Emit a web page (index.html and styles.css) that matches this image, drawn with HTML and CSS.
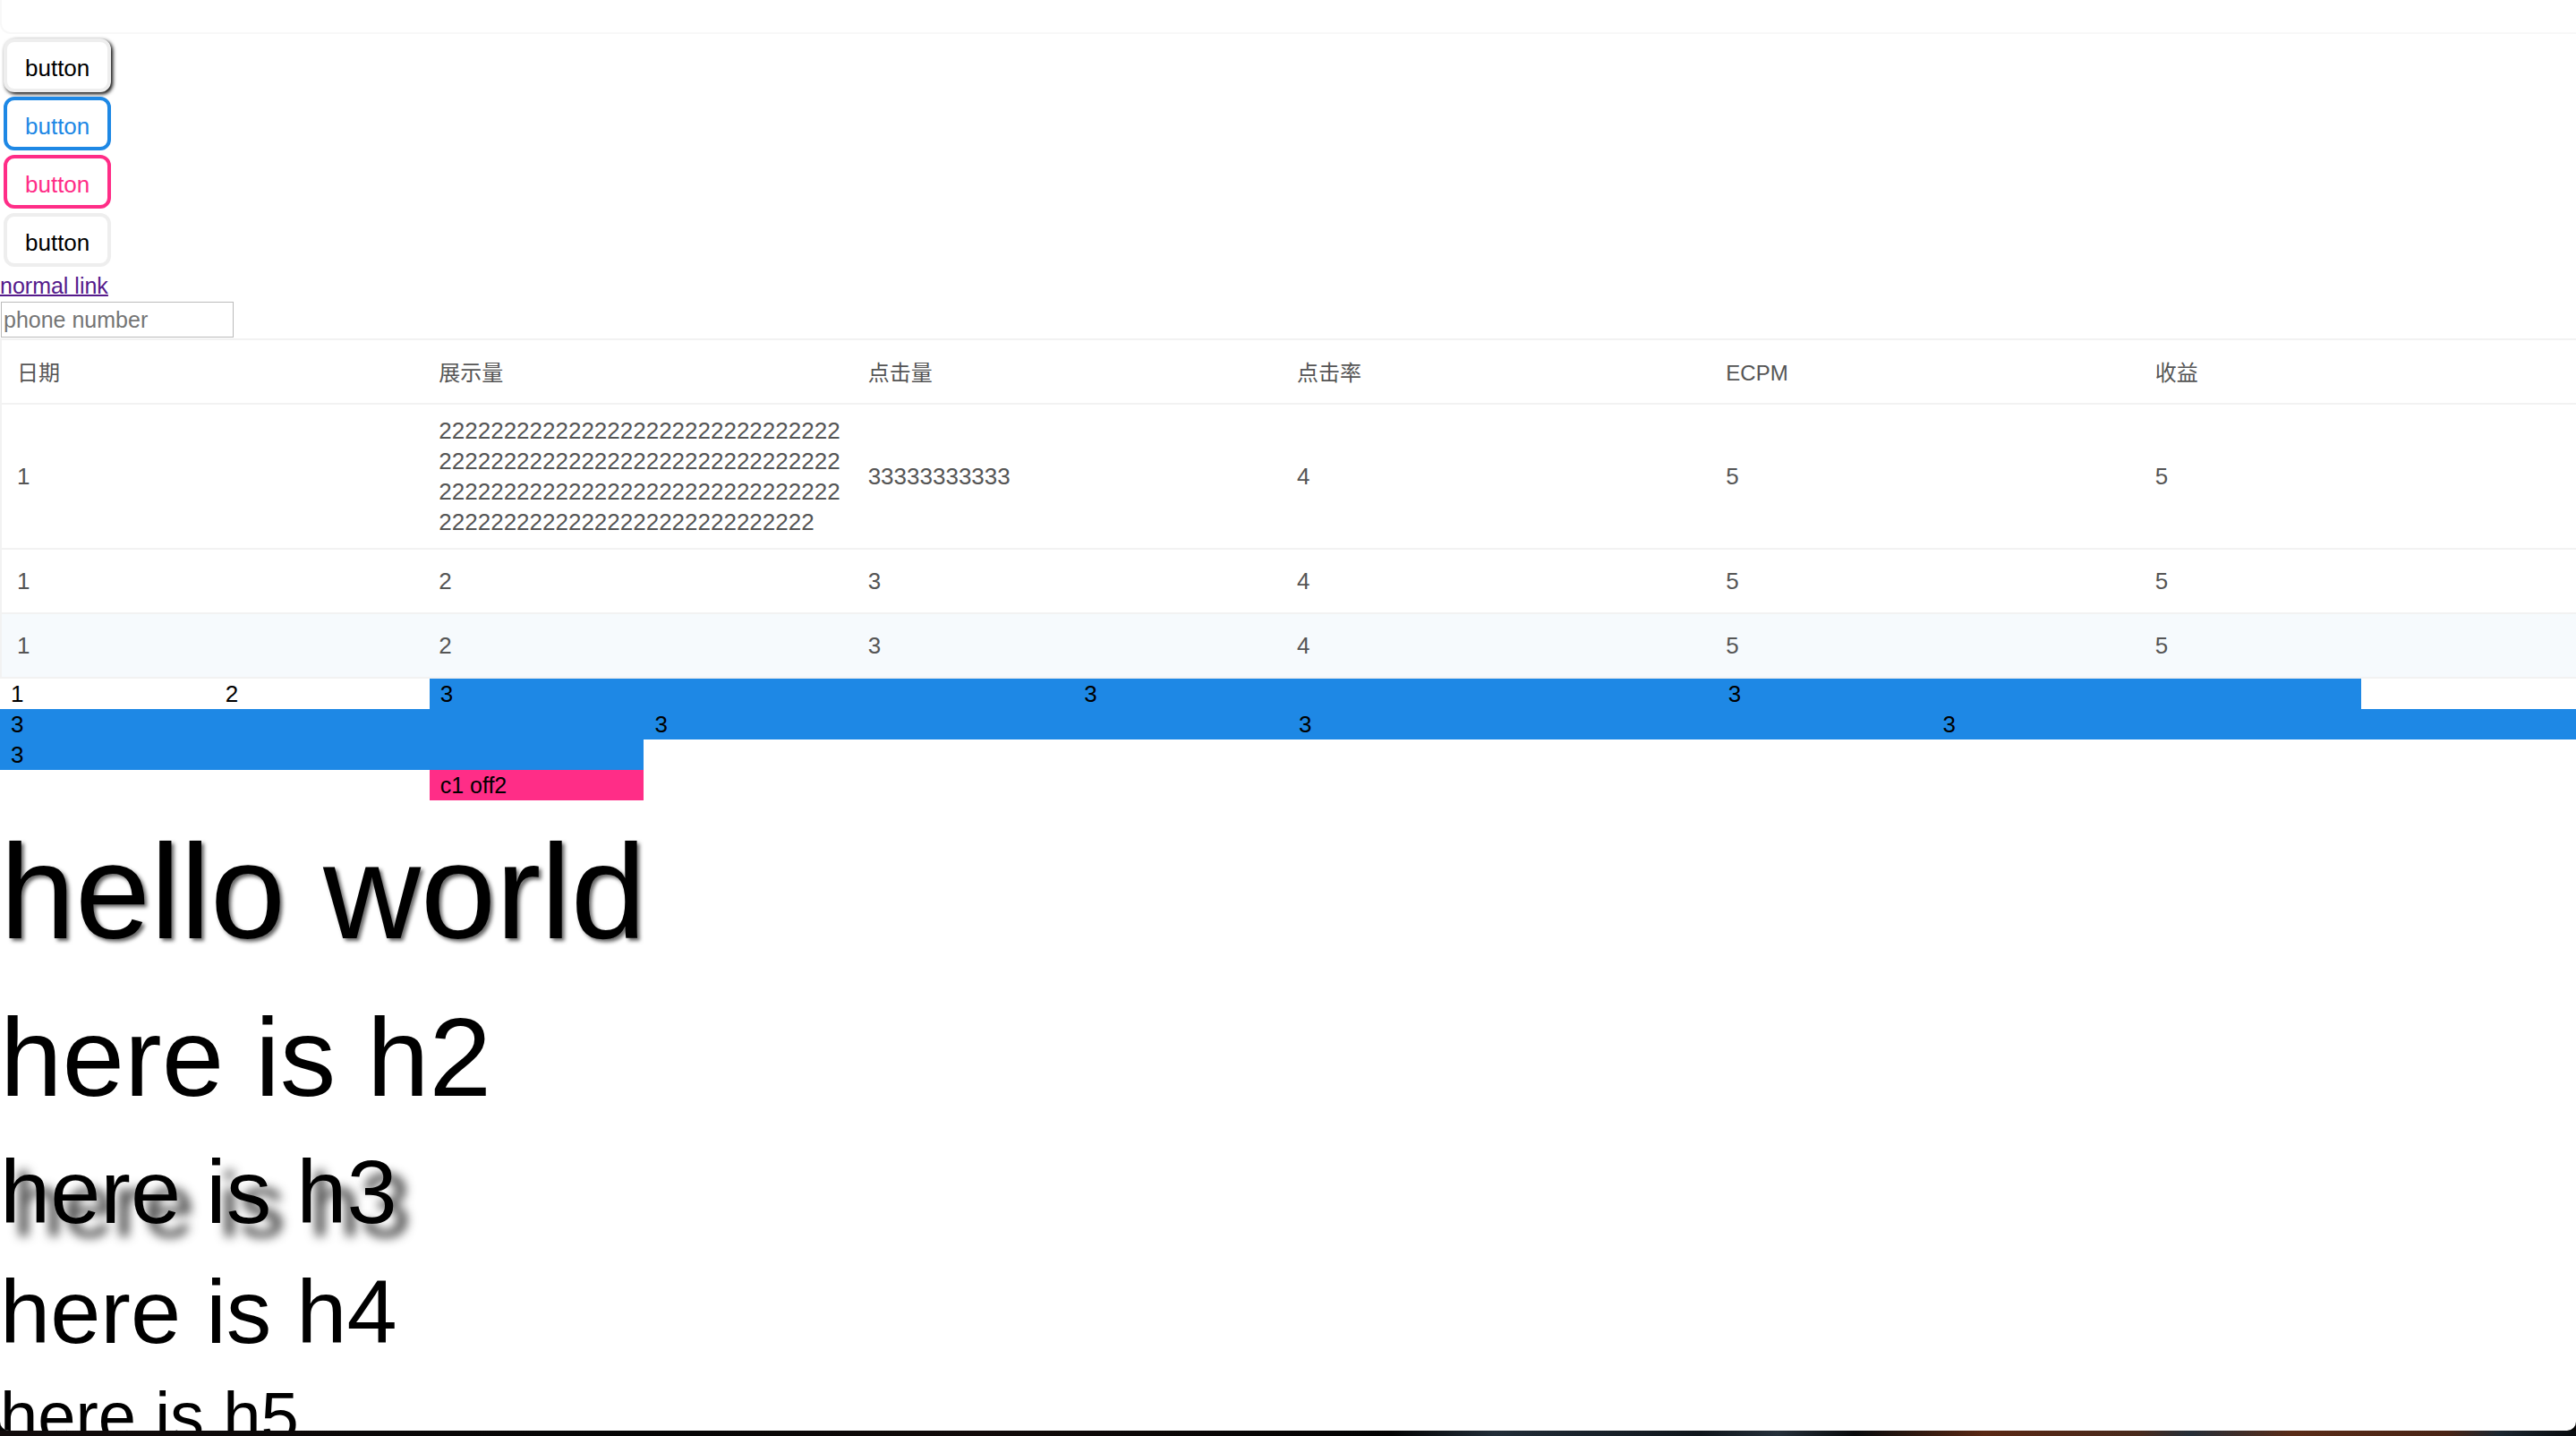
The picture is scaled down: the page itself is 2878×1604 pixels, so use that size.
FILE: index.html
```
<!DOCTYPE html>
<html lang="zh-CN">
<head>
<meta charset="utf-8">
<title>Components</title>
<link rel="stylesheet" href="styles.css">
</head>
<body>
<main class="page">
  <div class="panel"></div>
  <div class="buttons">
    <button type="button" class="btn btn-raised">button</button>
    <button type="button" class="btn btn-primary">button</button>
    <button type="button" class="btn btn-danger">button</button>
    <button type="button" class="btn">button</button>
  </div>
  <a class="link" href="#">normal link</a>
  <input class="field" type="tel" placeholder="phone number" aria-label="phone number">
  <table class="table">
    <thead>
      <tr><th>日期</th><th>展示量</th><th>点击量</th><th>点击率</th><th>ECPM</th><th>收益</th></tr>
    </thead>
    <tbody>
      <tr><td>1</td><td>22222222222222222222222222222222222222222222222222222222222222222222222222222222222222222222222222222222222222222222222222</td><td>33333333333</td><td>4</td><td>5</td><td>5</td></tr>
      <tr><td>1</td><td>2</td><td>3</td><td>4</td><td>5</td><td>5</td></tr>
      <tr class="active"><td>1</td><td>2</td><td>3</td><td>4</td><td>5</td><td>5</td></tr>
    </tbody>
  </table>
  <div class="grid">
    <div class="c1">1</div>
    <div class="c1">2</div>
    <div class="c3">3</div>
    <div class="c3">3</div>
    <div class="c3">3</div>
    <div class="c3">3</div>
    <div class="c3">3</div>
    <div class="c3">3</div>
    <div class="c3">3</div>
    <div class="c3">3</div>
    <div class="c1 off2">c1 off2</div>
  </div>
  <h1>hello world</h1>
  <h2>here is h2</h2>
  <h3>here is h3</h3>
  <h4>here is h4</h4>
  <h5>here is h5</h5>
</main>
<div class="desktop"></div>
</body>
</html>
```

FILE: styles.css
```
* {
  box-sizing: border-box;
}

body {
  display: flex;
  flex-direction: column;
  height: 100vh;
  margin: 0;
  overflow: hidden;
  background: #050505;
  color: #000;
  font: 26px/34px "Liberation Sans", "Noto Sans CJK SC", sans-serif;
}

.page {
  flex: 1;
  min-height: 0;
  overflow: hidden;
  background: #fff;
  border-radius: 0 0 10px 10px;
}

.panel {
  height: 38px;
  border: solid #f8f8f8;
  border-width: 0 0 2px 2px;
  border-radius: 0 0 0 12px;
}

.buttons {
  display: flex;
  flex-direction: column;
  align-items: flex-start;
  gap: 5px;
  padding: 5px 4px 4px;
}

.btn {
  height: 60px;
  padding: 5px 20px 0;
  border: 4px solid #eee;
  border-radius: 12px;
  background: #fff;
  color: #000;
  font: inherit;
}

.btn-raised {
  box-shadow: 2px 2px 4px #000;
}

.btn-primary {
  border-color: #1e88e5;
  color: #1e88e5;
}

.btn-danger {
  border-color: #ff2d87;
  color: #ff2d87;
}

.link {
  display: table;
  color: #551a8b;
  font-size: 25px;
  text-decoration-thickness: 2px;
}

.field {
  display: block;
  width: 260px;
  height: 40px;
  margin: 1px;
  padding: 0 2px;
  border: 1px solid #bbb;
  background: #fff;
  font: inherit;
  font-size: 25px;
}

.field::placeholder {
  color: #757575;
}

.table {
  width: 100%;
  table-layout: fixed;
  border-spacing: 0;
  border-top: 2px solid #f2f2f2;
  border-left: 2px solid #f2f2f2;
  color: #555;
}

.table th,
.table td {
  height: 72px;
  padding: 12px 9px;
  border-bottom: 2px solid #f2f2f2;
  text-align: left;
  vertical-align: middle;
  overflow-wrap: anywhere;
}

.table td {
  padding-right: 16px;
}

.table th {
  padding-top: 14px;
  padding-bottom: 10px;
  font-size: 24px;
  font-weight: 400;
}

.table th:first-child,
.table td:first-child {
  padding-left: 17px;
}

.active {
  background: #f6fafd;
}

.grid {
  display: grid;
  grid-template-columns: repeat(12, 1fr);
}

.c1,
.c3 {
  padding-left: 12px;
  white-space: nowrap;
}

.c3 {
  grid-column: span 3;
  background: #1e88e5;
}

.off2 {
  grid-column: 3;
  background: #ff2d87;
  font-size: 25px;
}

h1,
h2,
h3,
h4,
h5 {
  margin: 0;
  font-weight: 400;
}

h1 {
  font-size: 151px;
  line-height: 204px;
  text-shadow: 3px 3px 4px rgba(0, 0, 0, 0.6);
}

h2 {
  font-size: 125px;
  line-height: 166px;
}

h3,
h4 {
  font-size: 101px;
  line-height: 134px;
}

h3 {
  text-shadow: 15px 15px 12px rgba(0, 0, 0, 0.8);
}

h5 {
  font-size: 76px;
  line-height: 100px;
}

.desktop {
  height: 6px;
  background: linear-gradient(to right, #120c0c, #050505 25%, #120b0a 38%, #030303 54%, #222d38 58%, #10161c 66%, #26303b 69%, #080a0c 72%, #5a2814 77%, #4a2a1c 83%, #262e38 85%, #5a2c18 89%, #4a2415 95%, #1c2630 97%, #080b0e);
}
```
